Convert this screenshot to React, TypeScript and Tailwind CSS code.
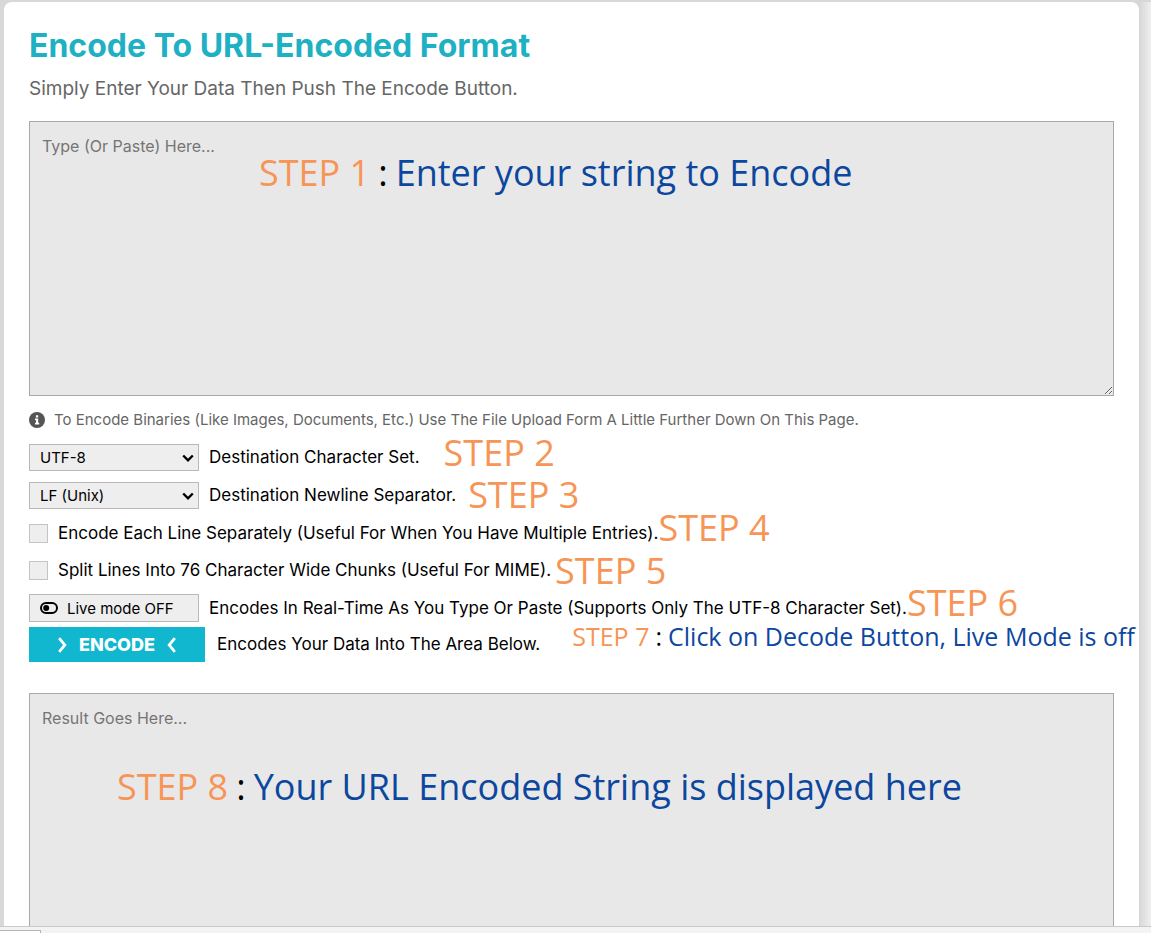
import { useState } from 'react';
import type { ReactNode } from 'react';

interface StepProps {
  number: number;
  text?: string;
  className?: string;
}

function Step({ number, text, className = 'gap-2 text-[36px] leading-[30px]' }: StepProps) {
  return (
    <span
      className={`flex whitespace-nowrap font-['Open_Sans','Noto_Sans',sans-serif] text-[#f79556] ${className}`}
    >
      STEP {number}
      {text && (
        <>
          <span className="text-black">:</span>
          <span className="text-[#0c479f]">{text}</span>
        </>
      )}
    </span>
  );
}

function Row({ children, className = 'h-[38px]' }: { children: ReactNode; className?: string }) {
  return <div className={`flex items-center whitespace-nowrap ${className}`}>{children}</div>;
}

function InfoIcon() {
  return (
    <svg viewBox="0 0 16 16" className="h-4 w-4 shrink-0" aria-hidden="true">
      <circle cx="8" cy="8" r="8" fill="#555" />
      <path d="M6.9 3.2h2.3v2.2H6.9zM6 6.6h3.2v4.2h1v1.6H6v-1.6h1V8.2H6z" fill="#fff" />
    </svg>
  );
}

function ToggleIcon() {
  return (
    <svg viewBox="0 0 18 12" className="h-3 w-[18px] shrink-0" aria-hidden="true">
      <rect x="1" y="1" width="16" height="10" rx="5" fill="none" stroke="#000" strokeWidth="2" />
      <circle cx="6.2" cy="6" r="3" fill="#000" />
    </svg>
  );
}

function Chevron({ className, d }: { className: string; d: string }) {
  return (
    <svg viewBox="0 0 12 14" className={className} fill="none" stroke="currentColor" strokeWidth="2.4" aria-hidden="true">
      <path d={d} />
    </svg>
  );
}

interface DropdownProps {
  id: string;
  options: string[];
}

function Dropdown({ id, options }: DropdownProps) {
  return (
    <div className="relative mr-[10px] w-[170px]">
      <select
        id={id}
        className="block h-[27px] w-full appearance-none border border-[#b9b9b9] bg-[#eeeeee] px-[10px] text-[15px] leading-[25px]"
      >
        {options.map((option) => (
          <option key={option}>{option}</option>
        ))}
      </select>
      <Chevron
        className="pointer-events-none absolute right-[5px] top-[7px] h-[14px] w-[12px]"
        d="M1.2 4.5 6 9.3l4.8-4.8"
      />
    </div>
  );
}

const checkboxStyle = 'mr-[10px] h-[19px] w-[19px] appearance-none border border-[#c4c4c4] bg-[#eeeeee] checked:bg-[#10b7cf]';
const areaStyle =
  'block w-full border border-[#a9a9a9] bg-[#e9e8e8] px-3 py-3 text-[16px] leading-[24px] placeholder:text-[#757575] focus:outline-none';

function App() {
  const [input, setInput] = useState('');
  const [output, setOutput] = useState('');
  const [live, setLive] = useState(false);

  const handleChange = (value: string) => {
    setInput(value);
    if (live) {
      setOutput(encodeURIComponent(value));
    }
  };

  return (
    <div className="flex h-screen flex-col overflow-hidden bg-[#f0f0f0] font-[Inter,'Open_Sans',sans-serif] text-[17px] leading-[27px] text-black">
      <div className="flex min-h-0 flex-1 border-b border-[#c9c9c9] bg-[#d8d8d8] pl-1 pt-[2px]">
        <main className="flex min-w-0 flex-1 flex-col rounded-t-lg bg-white px-[25px]">
          <h1 className="mt-6 whitespace-nowrap text-[32px] font-bold leading-[40px] text-[#1eb0c3]">
            Encode To URL-Encoded Format
          </h1>
          <p className="mt-[9px] whitespace-nowrap text-[19px] leading-[28px] text-[#666666]">
            Simply Enter Your Data Then Push The Encode Button.
          </p>

          <div className="relative mt-[18px]">
            <textarea
              aria-label="Data to encode"
              placeholder="Type (Or Paste) Here..."
              value={input}
              onChange={(e) => handleChange(e.target.value)}
              className={`h-[275px] ${areaStyle}`}
            />
            <div className="pointer-events-none absolute left-[230px] top-[32px]">
              <Step number={1} text="Enter your string to Encode" className="gap-2 text-[36px] leading-[40px]" />
            </div>
          </div>

          <p className="mt-3 flex items-center gap-[9px] whitespace-nowrap text-[15px] leading-[24px] text-[#666666]">
            <InfoIcon />
            To Encode Binaries (Like Images, Documents, Etc.) Use The File Upload Form A Little Further Down On This Page.
          </p>

          <div className="mt-[6px]">
            <Row>
              <Dropdown id="charset" options={['UTF-8', 'ASCII', 'ISO-8859-1']} />
              <label htmlFor="charset">Destination Character Set.</label>
              <div className="ml-6 self-start">
                <Step number={2} />
              </div>
            </Row>
            <Row>
              <Dropdown id="newline" options={['LF (Unix)', 'CRLF (Windows)']} />
              <label htmlFor="newline">Destination Newline Separator.</label>
              <div className="ml-3">
                <Step number={3} />
              </div>
            </Row>
            <Row>
              <input id="each-line" type="checkbox" className={checkboxStyle} />
              <label htmlFor="each-line">Encode Each Line Separately (Useful For When You Have Multiple Entries).</label>
              <div className="self-start">
                <Step number={4} className="text-[36px] leading-[28px]" />
              </div>
            </Row>
            <Row className="h-[37px]">
              <input id="chunks" type="checkbox" className={checkboxStyle} />
              <label htmlFor="chunks">Split Lines Into 76 Character Wide Chunks (Useful For MIME).</label>
              <div className="ml-1">
                <Step number={5} />
              </div>
            </Row>
            <Row>
              <button
                type="button"
                onClick={() => setLive(!live)}
                className="mr-[10px] flex h-[28px] w-[170px] shrink-0 items-center gap-[9px] border border-[#b9b9b9] bg-[#eeeeee] px-[10px] text-[15px]"
              >
                <ToggleIcon />
                Live mode {live ? 'ON' : 'OFF'}
              </button>
              <span>Encodes In Real-Time As You Type Or Paste (Supports Only The UTF-8 Character Set).</span>
              <div className="self-start">
                <Step number={6} className="text-[36px] leading-[28px]" />
              </div>
            </Row>
            <Row className="h-[35px]">
              <button
                type="button"
                onClick={() => setOutput(encodeURIComponent(input))}
                className="mr-3 flex h-[35px] w-[176px] shrink-0 items-center justify-center gap-[10px] bg-[#10b7cf] text-[18px] font-extrabold text-white"
              >
                <Chevron className="h-4 w-[14px]" d="m3.5 1 5 6-5 6" />
                ENCODE
                <Chevron className="h-4 w-[14px]" d="m8.5 1-5 6 5 6" />
              </button>
              <span>Encodes Your Data Into The Area Below.</span>
              <div className="ml-8 self-start">
                <Step
                  number={7}
                  text="Click on Decode Button, Live Mode is off"
                  className="gap-[6px] text-[25px] leading-[18px]"
                />
              </div>
            </Row>
          </div>

          <div className="relative mt-[31px] flex min-h-0 flex-1">
            <textarea
              aria-label="Encoded result"
              placeholder="Result Goes Here..."
              value={output}
              readOnly
              className={`resize-none border-b-0 ${areaStyle}`}
            />
            <div className="pointer-events-none absolute left-[88px] top-[74px]">
              <Step
                number={8}
                text="Your URL Encoded String is displayed here"
                className="gap-2 text-[36px] leading-[40px]"
              />
            </div>
          </div>
        </main>
        <div className="w-3 shrink-0 bg-linear-to-r from-[#d6d6d6] to-[#f0f0f0]" />
      </div>
      <footer className="h-[6px] shrink-0 bg-[#f3f3f3] pt-[3px]">
        <div className="h-[3px] w-[41px] border-r border-t border-[#b5b5b5] bg-white" />
      </footer>
    </div>
  );
}

export default App;
